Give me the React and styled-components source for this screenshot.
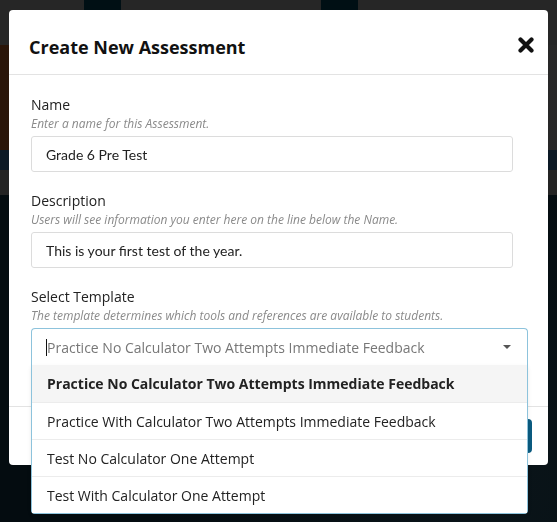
import React from 'react'
import styled, { createGlobalStyle } from 'styled-components'

const templates = [
	'Practice No Calculator Two Attempts Immediate Feedback',
	'Practice With Calculator Two Attempts Immediate Feedback',
	'Test No Calculator One Attempt',
	'Test With Calculator One Attempt',
]

export default function App() {
	return (
		<>
			<GlobalStyle />
			<Page>
				<TopBar>
					<Tab style={{ marginLeft: 84 }} />
					<Tab style={{ marginLeft: 200 }} />
				</TopBar>
				<Hero />
				<Band color="#0c1925" height={20} />
				<Band color="#242424" height={25} />
				<Backdrop />
			</Page>

			<Modal>
				<Header>
					<Title>Create New Assessment</Title>
					<Close aria-label="Close">
						<svg width="16" height="16" viewBox="0 0 16 16">
							<path
								d="M2.5 2.5 L13.5 13.5 M13.5 2.5 L2.5 13.5"
								stroke="#111"
								strokeWidth="4.2"
								strokeLinecap="round"
							/>
						</svg>
					</Close>
				</Header>

				<Body>
					<Field>
						<Label>Name</Label>
						<Hint>Enter a name for this Assessment.</Hint>
						<Input>Grade 6 Pre Test</Input>
					</Field>

					<Field>
						<Label>Description</Label>
						<Hint>Users will see information you enter here on the line below the Name.</Hint>
						<Input>This is your first test of the year.</Input>
					</Field>

					<Field>
						<Label>Select Template</Label>
						<Hint>The template determines which tools and references are available to students.</Hint>
						<SelectWrap>
							<SelectBox>
								<Cursor />
								<Placeholder>{templates[0]}</Placeholder>
								<Arrow />
							</SelectBox>
							<Menu>
								{templates.map((t, i) => (
									<Option key={t} active={i === 0}>
										{t}
									</Option>
								))}
							</Menu>
						</SelectWrap>
					</Field>
				</Body>

				<Footer>
					<Button>Create</Button>
				</Footer>
			</Modal>
		</>
	)
}

const GlobalStyle = createGlobalStyle`
	html, body {
		margin: 0;
		padding: 0;
		background: #040c10;
		overflow: hidden;
	}
	* {
		box-sizing: border-box;
	}
`

const Page = styled.div`
	display: flex;
	flex-direction: column;
	height: 522px;
`

const TopBar = styled.div`
	display: flex;
	align-items: flex-start;
	height: 45px;
	background: #262626;
`

const Tab = styled.div`
	width: 37px;
	height: 45px;
	background: #000f14;
`

const Hero = styled.div`
	height: 105px;
	background: linear-gradient(90deg, #2a1509 0%, #2a1a10 40%, #282828 100%);
`

const Band = styled.div`
	height: ${(p) => p.height}px;
	background: ${(p) => p.color};
`

const Backdrop = styled.div`
	flex: 1;
	background: radial-gradient(circle at 90% 90%, #0a1419 0%, #040c10 60%);
`

const Modal = styled.div`
	position: fixed;
	top: 10px;
	left: 9px;
	width: 539px;
	background: #fff;
	border-radius: 4px;
	display: flex;
	flex-direction: column;
	font-family: 'Open Sans', sans-serif;
	color: #222;
`

const Header = styled.div`
	display: flex;
	align-items: center;
	justify-content: space-between;
	height: 65px;
	padding: 0 14px 0 20px;
	border-bottom: 1px solid #e3e3e3;
`

const Title = styled.h2`
	margin: 0;
	font-size: 18px;
	font-weight: 700;
	color: #111;
	padding-top: 10px;
`

const Close = styled.button`
	border: none;
	background: none;
	padding: 0;
	display: flex;
	margin-top: 6px;
`

const Body = styled.div`
	padding: 19px 20px 23px 22px;
`

const Field = styled.div`
	display: flex;
	flex-direction: column;
	margin-bottom: 18px;
`

const Label = styled.div`
	font-size: 14px;
	line-height: 21px;
	color: #222;
`

const Hint = styled.div`
	font-size: 12px;
	font-style: italic;
	line-height: 17px;
	color: #8a8a8a;
	margin-bottom: 4px;
`

const Input = styled.div`
	width: 482px;
	height: 36px;
	display: flex;
	align-items: center;
	padding: 0 14px;
	border: 1px solid #dcdcdc;
	border-radius: 3px;
	font-family: 'Lato', sans-serif;
	font-size: 14px;
	color: #222;
`

const SelectWrap = styled.div`
	position: relative;
`

const SelectBox = styled.div`
	height: 37px;
	display: flex;
	align-items: center;
	padding: 0 15px 0 14px;
	border: 1px solid #8dc3dc;
	border-bottom: none;
	border-radius: 4px 4px 0 0;
`

const Cursor = styled.span`
	width: 1px;
	height: 17px;
	background: #111;
`

const Placeholder = styled.span`
	flex: 1;
	font-size: 14px;
	color: #777;
`

const Arrow = styled.span`
	width: 0;
	height: 0;
	border-left: 4px solid transparent;
	border-right: 4px solid transparent;
	border-top: 4px solid #555;
	margin-right: 1px;
`

const Menu = styled.div`
	position: absolute;
	top: 100%;
	left: 0;
	right: 0;
	background: #fff;
	border: 1px solid #8dc3dc;
	border-top: none;
	border-radius: 0 0 4px 4px;
	box-shadow: 0 2px 4px rgba(0, 0, 0, 0.08);
	z-index: 2;
`

const Option = styled.div`
	height: 37px;
	display: flex;
	align-items: center;
	padding: 0 15px;
	font-size: 14px;
	font-weight: ${(p) => (p.active ? 700 : 400)};
	background: ${(p) => (p.active ? '#f5f5f5' : '#fff')};
	color: #222;
	& + & {
		border-top: 1px solid #ececec;
	}
`

const Footer = styled.div`
	display: flex;
	justify-content: flex-end;
	padding: 12px 16px;
	border-top: 1px solid #e3e3e3;
`

const Button = styled.button`
	height: 34px;
	padding: 0 16px;
	border: none;
	border-radius: 4px;
	background: #0b5b80;
	color: #fff;
	font-family: 'Open Sans', sans-serif;
	font-size: 14px;
`
